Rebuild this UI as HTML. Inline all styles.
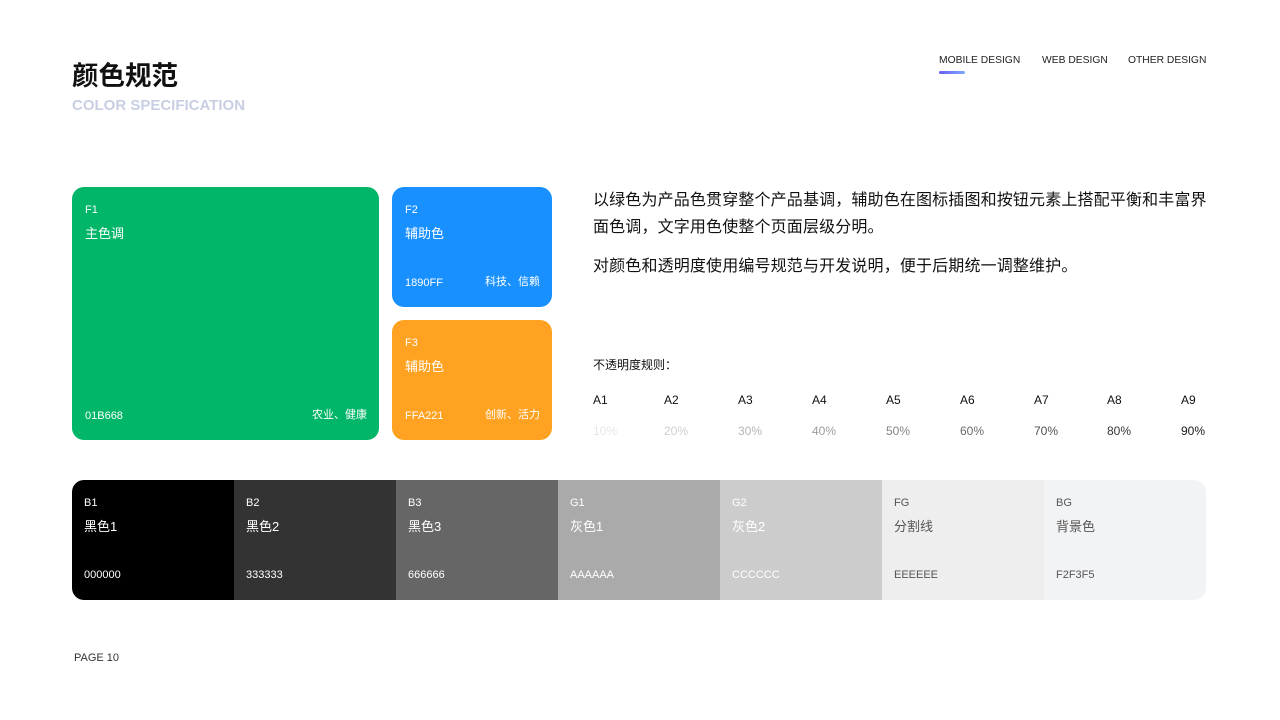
<!DOCTYPE html>
<html><head><meta charset="utf-8"><style>
*{margin:0;padding:0;box-sizing:border-box}
body{width:1280px;height:720px;background:#fff;position:relative;font-family:"Liberation Sans","Noto Sans CJK SC",sans-serif;color:#111;overflow:hidden}
.a{position:absolute;white-space:nowrap}
.box{position:absolute;border-radius:12px;color:#fff}
.box .c{position:absolute;left:13px;top:17px;font-size:11px}
.box .n{position:absolute;left:13px;top:36px;font-size:13px}
.box .b{position:absolute;left:13px;bottom:18px;font-size:11px}
.box .r{position:absolute;right:12px;bottom:18px;font-size:11px}
.bar{position:absolute;left:72px;top:480px;width:1134px;height:120px;border-radius:12px;overflow:hidden;display:flex}
.cell{flex:1;position:relative}
.cell .c{position:absolute;left:12px;top:17px;font-size:11px}
.cell .n{position:absolute;left:12px;top:36px;font-size:13px}
.cell .b{position:absolute;left:12px;top:89px;font-size:11px}
</style></head><body>
<div class="a" style="left:72px;top:54px;font-size:26.5px;font-weight:bold">颜色规范</div>
<div class="a" style="left:72px;top:97px;font-size:15px;font-weight:bold;color:#c9cfe3">COLOR SPECIFICATION</div>
<div class="a" style="left:939px;top:55px;font-size:10.3px;color:#222">MOBILE DESIGN</div>
<div class="a" style="left:939px;top:71px;width:26px;height:3px;border-radius:2px;background:linear-gradient(90deg,#6a5cf6,#7fa8ff)"></div>
<div class="a" style="left:1042px;top:55px;font-size:10.3px;color:#222">WEB DESIGN</div>
<div class="a" style="left:1128px;top:55px;font-size:10.3px;color:#222">OTHER DESIGN</div>

<div class="box" style="left:72px;top:187px;width:307px;height:253px;background:#01B668"><span class="c">F1</span><span class="n">主色调</span><span class="b">01B668</span><span class="r">农业、健康</span></div>
<div class="box" style="left:392px;top:187px;width:160px;height:120px;background:#1890FF"><span class="c">F2</span><span class="n">辅助色</span><span class="b">1890FF</span><span class="r">科技、信赖</span></div>
<div class="box" style="left:392px;top:320px;width:160px;height:120px;background:#FFA221"><span class="c">F3</span><span class="n">辅助色</span><span class="b">FFA221</span><span class="r">创新、活力</span></div>

<div class="a" style="left:593px;top:187px;width:622px;font-size:16px;line-height:27px;letter-spacing:0.15px;white-space:normal;color:#111">以绿色为产品色贯穿整个产品基调，辅助色在图标插图和按钮元素上搭配平衡和丰富界面色调，文字用色使整个页面层级分明。</div>
<div class="a" style="left:593px;top:256px;font-size:16px;line-height:22px;letter-spacing:0.15px;color:#111">对颜色和透明度使用编号规范与开发说明，便于后期统一调整维护。</div>
<div class="a" style="left:593px;top:356px;font-size:12px;color:#111">不透明度规则：</div>

<div class="a" style="left:593px;top:393px;font-size:12px">A1</div><div class="a" style="left:593px;top:424px;font-size:12px;color:rgba(0,0,0,.1)">10%</div>
<div class="a" style="left:664px;top:393px;font-size:12px">A2</div><div class="a" style="left:664px;top:424px;font-size:12px;color:rgba(0,0,0,.2)">20%</div>
<div class="a" style="left:738px;top:393px;font-size:12px">A3</div><div class="a" style="left:738px;top:424px;font-size:12px;color:rgba(0,0,0,.3)">30%</div>
<div class="a" style="left:812px;top:393px;font-size:12px">A4</div><div class="a" style="left:812px;top:424px;font-size:12px;color:rgba(0,0,0,.4)">40%</div>
<div class="a" style="left:886px;top:393px;font-size:12px">A5</div><div class="a" style="left:886px;top:424px;font-size:12px;color:rgba(0,0,0,.5)">50%</div>
<div class="a" style="left:960px;top:393px;font-size:12px">A6</div><div class="a" style="left:960px;top:424px;font-size:12px;color:rgba(0,0,0,.6)">60%</div>
<div class="a" style="left:1034px;top:393px;font-size:12px">A7</div><div class="a" style="left:1034px;top:424px;font-size:12px;color:rgba(0,0,0,.7)">70%</div>
<div class="a" style="left:1107px;top:393px;font-size:12px">A8</div><div class="a" style="left:1107px;top:424px;font-size:12px;color:rgba(0,0,0,.8)">80%</div>
<div class="a" style="left:1181px;top:393px;font-size:12px">A9</div><div class="a" style="left:1181px;top:424px;font-size:12px;color:rgba(0,0,0,.9)">90%</div>

<div class="bar">
<div class="cell" style="background:#000;color:#fff"><span class="c">B1</span><span class="n">黑色1</span><span class="b">000000</span></div>
<div class="cell" style="background:#333;color:#fff"><span class="c">B2</span><span class="n">黑色2</span><span class="b">333333</span></div>
<div class="cell" style="background:#666;color:#fff"><span class="c">B3</span><span class="n">黑色3</span><span class="b">666666</span></div>
<div class="cell" style="background:#aaa;color:#fff"><span class="c">G1</span><span class="n">灰色1</span><span class="b">AAAAAA</span></div>
<div class="cell" style="background:#ccc;color:#fff"><span class="c">G2</span><span class="n">灰色2</span><span class="b">CCCCCC</span></div>
<div class="cell" style="background:#eee;color:#555"><span class="c">FG</span><span class="n">分割线</span><span class="b">EEEEEE</span></div>
<div class="cell" style="background:#F2F3F5;color:#555"><span class="c">BG</span><span class="n">背景色</span><span class="b">F2F3F5</span></div>
</div>
<div class="a" style="left:74px;top:652px;font-size:11px;color:#333">PAGE 10</div>
</body></html>
